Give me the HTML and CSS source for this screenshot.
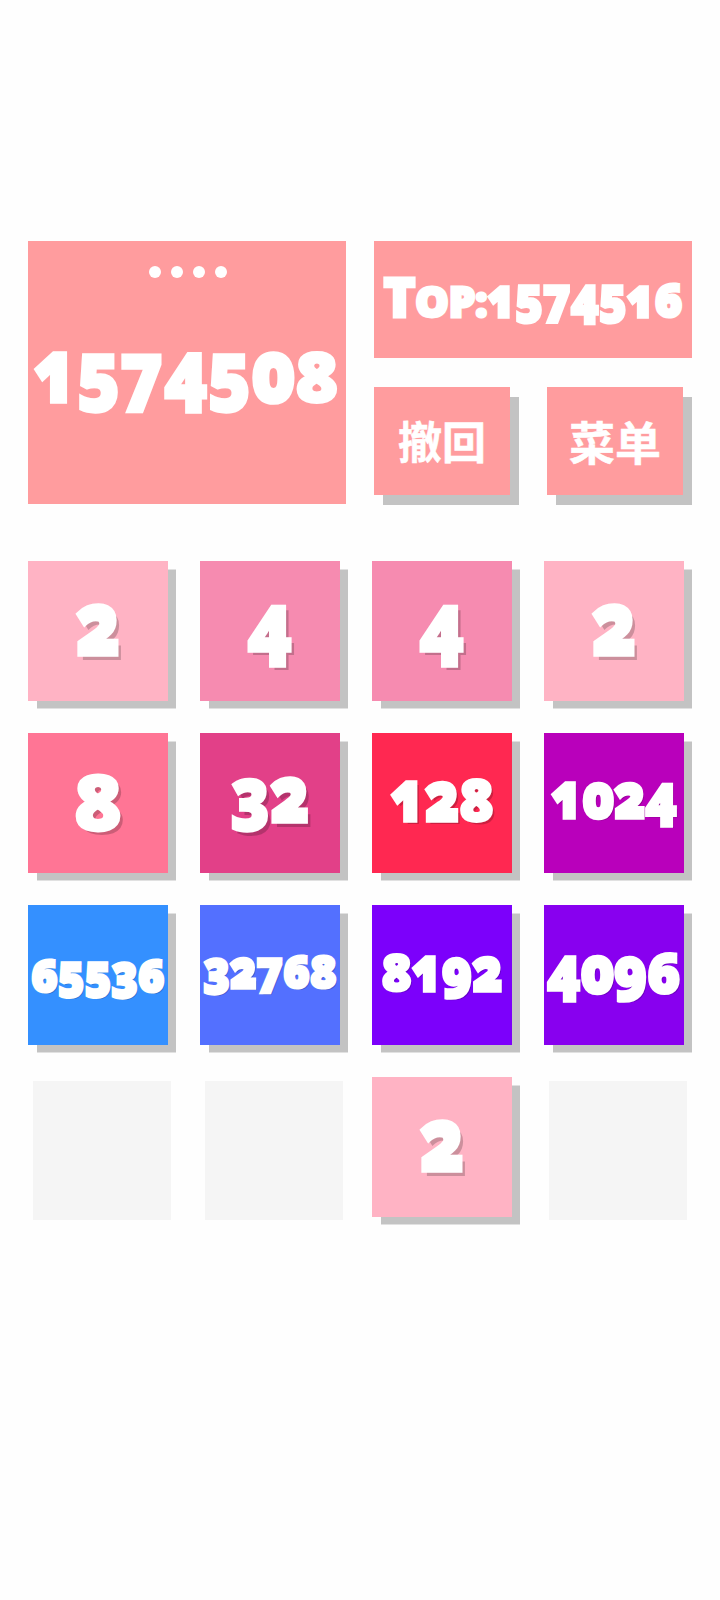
FILE: index.html
```html
<!DOCTYPE html>
<html>

<head>
    <meta charset="UTF-8">
    <title>2048</title>
    <link rel="stylesheet" href="styles.css">
</head>

<body>
    <div class="header">
        <div class="score-box">
            <div class="dots"><span></span><span></span><span></span><span></span></div>
            <div class="score"><span class="x">1</span><span class="d">5</span><span class="d">7</span><span class="d">4</span><span class="d">5</span><span class="x">0</span><span class="a">8</span></div>
        </div>
        <div class="side">
            <div class="top-score"><span class="top-t">T</span><span class="top-op">op:</span><span class="x">1</span><span class="d">5</span><span class="d">7</span><span class="d">4</span><span class="d">5</span><span class="x">1</span><span class="a">6</span></div>
            <div class="buttons">
                <button class="btn">撤回</button>
                <button class="btn btn-wide">菜单</button>
            </div>
        </div>
    </div>

    <div class="board">
        <div class="tile t2"><span class="x">2</span></div>
        <div class="tile t4"><span class="d">4</span></div>
        <div class="tile t4"><span class="d">4</span></div>
        <div class="tile t2"><span class="x">2</span></div>
        <div class="tile t8"><span class="a">8</span></div>
        <div class="tile t32"><span class="d">3</span><span class="x">2</span></div>
        <div class="tile t128"><span class="x">1</span><span class="x">2</span><span class="a">8</span></div>
        <div class="tile t1024"><span class="x">1</span><span class="x">0</span><span class="x">2</span><span class="d">4</span></div>
        <div class="tile t65536"><span class="a">6</span><span class="d">5</span><span class="d">5</span><span class="d">3</span><span class="a">6</span></div>
        <div class="tile t32768"><span class="d">3</span><span class="x">2</span><span class="d">7</span><span class="a">6</span><span class="a">8</span></div>
        <div class="tile t8192"><span class="a">8</span><span class="x">1</span><span class="d">9</span><span class="x">2</span></div>
        <div class="tile t4096"><span class="d">4</span><span class="x">0</span><span class="d">9</span><span class="a">6</span></div>
        <div class="empty"></div>
        <div class="empty"></div>
        <div class="tile t2"><span class="x">2</span></div>
        <div class="empty"></div>
    </div>
</body>

</html>
```

FILE: styles.css
```css
* {
    box-sizing: border-box;
}

body {
    margin: 0;
    height: 1600px;
    padding: 241px 28px 0;
    background-color: #fefefe;
    color: #ffffff;
    font-family: 'Open Sans', 'Noto Sans CJK SC', sans-serif;
    font-weight: 800;
    font-variant-numeric: oldstyle-nums;
    -webkit-text-stroke: 3px #ffffff;
}

/* the old style digits are stretched one by one: x height, descending, ascending */
.x, .d, .a {
    display: inline-block;
    line-height: 1;
    transform-origin: 50% 0.888em;
}

.x {
    transform: scaleY(1.2);
}

.d {
    transform: translateY(-0.04em) scaleY(1.1);
}

.a {
    transform: scaleY(1);
}

.header {
    display: flex;
    gap: 28px;
    height: 264px;
}

.score-box {
    width: 318px;
    height: 263px;
    padding-top: 25px;
    background-color: #ff9c9e;
    text-align: center;
}

.dots {
    display: flex;
    justify-content: center;
    gap: 10px;
    margin-left: 2px;
}

.dots span {
    width: 12px;
    height: 12px;
    border-radius: 50%;
    background-color: #ffffff;
}

.score {
    margin-top: 60px;
    margin-left: -2px;
    font-size: 72px;
    line-height: 1;
    white-space: nowrap;
}

.score .a {
    transform: scaleY(0.95);
}

.side {
    width: 318px;
}

.top-score {
    height: 117px;
    background-color: #ff9c9e;
    font-size: 46px;
    line-height: 110px;
    text-align: center;
    white-space: nowrap;
}

.top-t {
    font-size: 54px;
}

.top-op {
    font-size: 42px;
    text-transform: uppercase;
}

.buttons {
    display: flex;
    gap: 37px;
    margin-top: 29px;
}

.btn {
    width: 136px;
    height: 108px;
    padding: 0 0 3px;
    border: none;
    background-color: #ff9c9e;
    box-shadow: 9px 10px 0 #c3c3c3;
    color: #ffffff;
    font-family: 'Noto Sans CJK SC', sans-serif;
    font-size: 44px;
    font-weight: 700;
    -webkit-text-stroke: 0.5px #ffffff;
}

.btn-wide {
    font-size: 46px;
}

.board {
    display: grid;
    grid-template-columns: repeat(4, 140px);
    grid-auto-rows: 140px;
    gap: 32px;
    margin-top: 56px;
}

.tile {
    display: flex;
    align-items: center;
    justify-content: center;
    padding-bottom: 8px;
    box-shadow: 8.5px 8px 0 -0.5px #c3c3c3;
    font-size: 74px;
    line-height: 1;
    text-shadow: 4px 4px 0 rgba(0, 0, 0, 0.2);
    white-space: nowrap;
}

.empty {
    margin: 4px -3px -3px 5px;
    background-color: #f5f5f5;
}

.t2 { background-color: #ffb3c4; }
.t4 { background-color: #f68bb0; }
.t8 { background-color: #ff7595; font-size: 80px; }
.t8 .a { transform: scaleY(0.95); }
.t32 { background-color: #e24088; font-size: 65px; padding-bottom: 12px; }
.t128 { background-color: #ff2851; font-size: 57px; text-shadow: 3px 3px 0 rgba(0, 0, 0, 0.2); }
.t1024 { background-color: #b900bb; font-size: 52px; padding-bottom: 10px; text-shadow: 2px 2px 0 rgba(0, 0, 0, 0.2); }
.t65536 { background-color: #3490ff; font-size: 44px; padding-bottom: 0; text-shadow: 2px 2px 0 rgba(0, 0, 0, 0.2); }
.t32768 { background-color: #5370ff; font-size: 44px; text-shadow: 2px 2px 0 rgba(0, 0, 0, 0.2); }
.t8192 { background-color: #7c00fb; font-size: 50px; padding-bottom: 6px; text-shadow: 2px 2px 0 rgba(0, 0, 0, 0.2); }
.t4096 { background-color: #8800ef; font-size: 55px; text-shadow: 2px 2px 0 rgba(0, 0, 0, 0.2); }
```
